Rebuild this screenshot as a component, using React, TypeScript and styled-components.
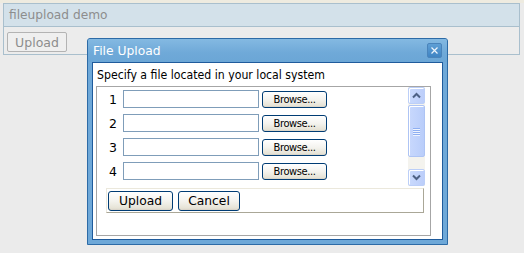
import React from "react";
import styled, { createGlobalStyle } from "styled-components";

const Global = createGlobalStyle`
  html, body { margin: 0; padding: 0; }
  body {
    background: linear-gradient(#eeebe0 0 3px, #ebebeb 3px);
    font-family: "DejaVu Sans", Verdana, sans-serif;
    font-size: 12px;
    width: 524px;
    height: 253px;
    overflow: hidden;
  }
`;

const Page = styled.div`
  position: relative;
  padding: 3px 4px 0 3px;
  height: 250px;
`;

const Panel = styled.div`
  border: 1px solid #a9bfcd;
  background: #ececec;
`;

const PanelHeader = styled.div`
  height: 22px;
  line-height: 22px;
  padding-left: 5px;
  background: #d3e1ea;
  border-bottom: 1px solid #a9bfcd;
  color: #8d8d8d;
  font-size: 12.2px;
`;

const PanelBody = styled.div`
  height: 27px;
  padding: 5px 3px 0 3px;
  box-sizing: border-box;
`;

const GhostButton = styled.button`
  width: 60px;
  height: 20px;
  padding: 0;
  border: 1px solid #b3b3b3;
  border-radius: 2px;
  background: #efefef;
  color: #8d8d8d;
  font: inherit;
  font-size: 12.5px;
`;

const Dialog = styled.div`
  position: absolute;
  left: 87px;
  top: 38px;
  width: 361px;
  height: 207px;
  box-sizing: border-box;
  border: 1px solid #2d6ba6;
  border-radius: 3px 3px 0 0;
  background: #6ea8d8;
  display: flex;
  flex-direction: column;
`;

const TitleBar = styled.div`
  height: 23px;
  flex: none;
  display: flex;
  align-items: center;
  justify-content: space-between;
  padding: 0 5px 0 5px;
  background: linear-gradient(#84b9e2, #6fa9d8 60%, #6ba6d6);
  border-radius: 2px 2px 0 0;
`;

const Title = styled.span`
  color: #ffffff;
  font-size: 12.3px;
  margin-top: 1px;
`;

const CloseButton = styled.div`
  width: 15px;
  height: 15px;
  box-sizing: border-box;
  border: 1px solid #4a84bb;
  border-radius: 2px;
  background: linear-gradient(#5f9fd5, #3f84c3);
  display: flex;
  align-items: center;
  justify-content: center;
`;

const Content = styled.div`
  flex: 1;
  margin: 0 4px 4px 4px;
  border: 1px solid #1f5b9c;
  background: #ffffff;
  padding: 0 3px;
  display: flex;
  flex-direction: column;
`;

const Prompt = styled.div`
  padding: 5px 0 3px 1px;
  line-height: 15px;
  color: #000;
  font-family: "DejaVu Sans Condensed", "DejaVu Sans", sans-serif;
  font-size: 12.2px;
`;

const GreyBox = styled.div`
  width: 335px;
  height: 150px;
  box-sizing: border-box;
  border: 1px solid #a6a6a6;
`;

const ListArea = styled.div`
  height: 99px;
  display: grid;
  grid-template-columns: 311px 17px;
  padding-right: 5px;
`;

const Rows = styled.div`
  padding-top: 3px;
  display: flex;
  flex-direction: column;
  gap: 6px;
`;

const Row = styled.div`
  display: flex;
  align-items: center;
  height: 18px;
`;

const Num = styled.span`
  width: 20px;
  margin-right: 6px;
  text-align: right;
  font-size: 12.5px;
  color: #000;
`;

const TextBox = styled.input`
  width: 136px;
  height: 18px;
  box-sizing: border-box;
  border: 1px solid #7f9db9;
  margin: 0 3px 0 0;
  padding: 0 2px;
  background: #fff;
`;

const XPButton = styled.button<{ $w: number; $h: number; $small?: boolean }>`
  width: ${(p) => p.$w}px;
  height: ${(p) => p.$h}px;
  box-sizing: border-box;
  padding: 0;
  border: 1px solid #003c74;
  border-radius: 3px;
  background: linear-gradient(#ffffff, #f4f3ee 50%, #e6e3d6 90%, #d6d0c5);
  color: #000;
  font-family: ${(p) =>
    p.$small ? '"DejaVu Sans Condensed", "DejaVu Sans", sans-serif' : '"DejaVu Sans", sans-serif'};
  font-size: ${(p) => (p.$small ? 11 : 12.3)}px;
  letter-spacing: ${(p) => (p.$small ? -0.4 : 0)}px;
  line-height: 1;
  margin-top: 1px;
`;

const ScrollBar = styled.div`
  display: grid;
  grid-template-rows: 17px 53px 1fr 17px;
  background: #f4f3ee;
`;

const ScrollBtn = styled.div`
  box-sizing: border-box;
  border: 1px solid #bccff8;
  border-radius: 2px;
  background: linear-gradient(90deg, #cadafd, #bccefa);
  display: flex;
  align-items: center;
  justify-content: center;
  box-shadow: inset 1px 1px 0 #ffffff;
`;

const Thumb = styled.div`
  box-sizing: border-box;
  margin-top: 1px;
  border: 1px solid #aec4f4;
  border-radius: 2px;
  background: linear-gradient(90deg, #c8d8fd, #b9cdfa);
  box-shadow: inset 1px 1px 0 #ffffff;
  display: flex;
  flex-direction: column;
  align-items: center;
  justify-content: center;
  gap: 1px;
`;

const Grip = styled.span`
  display: block;
  width: 7px;
  height: 1px;
  background: #8eaff2;
  box-shadow: 0 1px 0 #eef3fe;
`;

const ButtonsBox = styled.div`
  margin: 2px 0 0 9px;
  width: 318px;
  height: 25px;
  box-sizing: border-box;
  border: 1px solid;
  border-color: #ebe8dc #aaa797 #aaa797 #ebe8dc;
  padding: 1px 0 0 1px;
  display: flex;
  gap: 5px;
  align-items: flex-start;
`;

const Chevron = ({ up }: { up?: boolean }) => (
  <svg width="9" height="7" viewBox="0 0 9 7">
    <path
      d={up ? "M1 5.5 L4.5 2 L8 5.5" : "M1 1.5 L4.5 5 L8 1.5"}
      fill="none"
      stroke="#4d6185"
      strokeWidth="2"
    />
  </svg>
);

const CloseX = () => (
  <svg width="7" height="7" viewBox="0 0 7 7">
    <path d="M0.5 0.5 L6.5 6.5 M6.5 0.5 L0.5 6.5" stroke="#eef5fc" strokeWidth="1.2" />
  </svg>
);

export default function App() {
  return (
    <>
      <Global />
      <Page>
        <Panel>
          <PanelHeader>fileupload demo</PanelHeader>
          <PanelBody>
            <GhostButton disabled>Upload</GhostButton>
          </PanelBody>
        </Panel>
        <Dialog>
          <TitleBar>
            <Title>File Upload</Title>
            <CloseButton>
              <CloseX />
            </CloseButton>
          </TitleBar>
          <Content>
            <Prompt>Specify a file located in your local system</Prompt>
            <GreyBox>
              <ListArea>
                <Rows>
                  {[1, 2, 3, 4].map((n) => (
                    <Row key={n}>
                      <Num>{n}</Num>
                      <TextBox type="text" />
                      <XPButton $w={65} $h={17} $small>
                        Browse...
                      </XPButton>
                    </Row>
                  ))}
                </Rows>
                <ScrollBar>
                  <ScrollBtn>
                    <Chevron up />
                  </ScrollBtn>
                  <Thumb>
                    <Grip />
                    <Grip />
                    <Grip />
                    <Grip />
                  </Thumb>
                  <div />
                  <ScrollBtn>
                    <Chevron />
                  </ScrollBtn>
                </ScrollBar>
              </ListArea>
              <ButtonsBox>
                <XPButton $w={65} $h={20}>
                  Upload
                </XPButton>
                <XPButton $w={62} $h={20}>
                  Cancel
                </XPButton>
              </ButtonsBox>
            </GreyBox>
          </Content>
        </Dialog>
      </Page>
    </>
  );
}
